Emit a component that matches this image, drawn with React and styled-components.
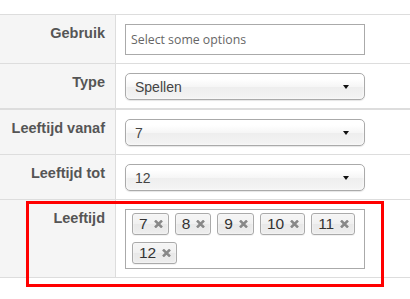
import styled, { createGlobalStyle } from "styled-components"

const GlobalStyle = createGlobalStyle`
  body {
    margin: 0;
    background: #fff;
    font-family: "Liberation Sans", Arial, sans-serif;
  }
`

const Page = styled.div`
  box-sizing: border-box;
  min-height: 100vh;
  padding-top: 14px;
`

const Table = styled.div`
  border-top: 1px solid #ddd;
`

const Row = styled.div`
  position: relative;
  display: grid;
  grid-template-columns: 116px 1fr;
  border-bottom: ${props => props.$thick ? 2 : 1}px solid #ddd;
`

const Label = styled.div`
  background-color: #f5f5f5;
  border-right: 1px solid #ddd;
  text-align: right;
  padding: 8px 10px 0 0;
  font-weight: bold;
  font-size: 14.5px;
  line-height: 20px;
  color: #555;
`

const Cell = styled.div`
  padding: 9px 0 8px 9px;
`

const TextBox = styled.div`
  box-sizing: border-box;
  width: 240px;
  height: 31px;
  border: 1px solid #aaa;
  background: #fff;
  display: flex;
  align-items: center;
  padding-left: 5px;
  font-family: "Open Sans", sans-serif;
  font-size: 12.3px;
  color: #666;
`

const Select = styled.div`
  box-sizing: border-box;
  width: 240px;
  height: 27px;
  border: 1px solid #aaa;
  border-radius: 5px;
  background: linear-gradient(#fff 20%, #f6f6f6 50%, #eee 52%, #f4f4f4 100%);
  box-shadow: 0 0 3px #fff inset, 0 1px 1px rgba(0, 0, 0, 0.1);
  display: flex;
  align-items: center;
  justify-content: space-between;
  padding: 0 15px 0 9px;
  font-size: 14px;
  color: #444;
`

const Caret = styled.span`
  width: 0;
  height: 0;
  border-left: 3.5px solid transparent;
  border-right: 3.5px solid transparent;
  border-top: 4px solid #111;
`

const MultiBox = styled.div`
  box-sizing: border-box;
  width: 240px;
  min-height: 60px;
  border: 1px solid #aaa;
  background: #fff;
  padding: 3px 6px;
  display: flex;
  flex-wrap: wrap;
  align-content: flex-start;
  gap: 7px 6px;
`

const Choice = styled.span`
  box-sizing: border-box;
  height: 22px;
  display: inline-flex;
  align-items: center;
  gap: 6px;
  padding: 0 5px 0 6px;
  border: 1px solid #aaa;
  border-radius: 3px;
  background: linear-gradient(#f4f4f4 20%, #f0f0f0 50%, #e8e8e8 52%, #eee 100%);
  box-shadow: 0 0 2px #fff inset, 0 1px 0 rgba(0, 0, 0, 0.05);
  font-size: 15.5px;
  color: #333;
`

const Highlight = styled.div`
  position: absolute;
  left: 26px;
  top: 1px;
  width: 358px;
  height: 86px;
  box-sizing: border-box;
  border: 3px solid #f00;
  pointer-events: none;
`

function CloseIcon() {
  return (
    <svg width="9" height="8" viewBox="0 0 9 8">
      <path d="M1 0.5 L8 7.5 M8 0.5 L1 7.5" stroke="#888" strokeWidth="2.5" />
    </svg>
  )
}

function App() {
  const ages = ["7", "8", "9", "10", "11", "12"]

  return (
    <Page>
      <GlobalStyle />
      <Table>
        <Row>
          <Label>Gebruik</Label>
          <Cell>
            <TextBox>Select some options</TextBox>
          </Cell>
        </Row>
        <Row $thick>
          <Label>Type</Label>
          <Cell>
            <Select>Spellen<Caret /></Select>
          </Cell>
        </Row>
        <Row>
          <Label>Leeftijd vanaf</Label>
          <Cell>
            <Select>7<Caret /></Select>
          </Cell>
        </Row>
        <Row>
          <Label>Leeftijd tot</Label>
          <Cell>
            <Select>12<Caret /></Select>
          </Cell>
        </Row>
        <Row>
          <Label>Leeftijd</Label>
          <Cell>
            <MultiBox>
              {ages.map(age => (
                <Choice key={age}>{age}<CloseIcon /></Choice>
              ))}
            </MultiBox>
          </Cell>
          <Highlight />
        </Row>
      </Table>
    </Page>
  )
}

export default App
